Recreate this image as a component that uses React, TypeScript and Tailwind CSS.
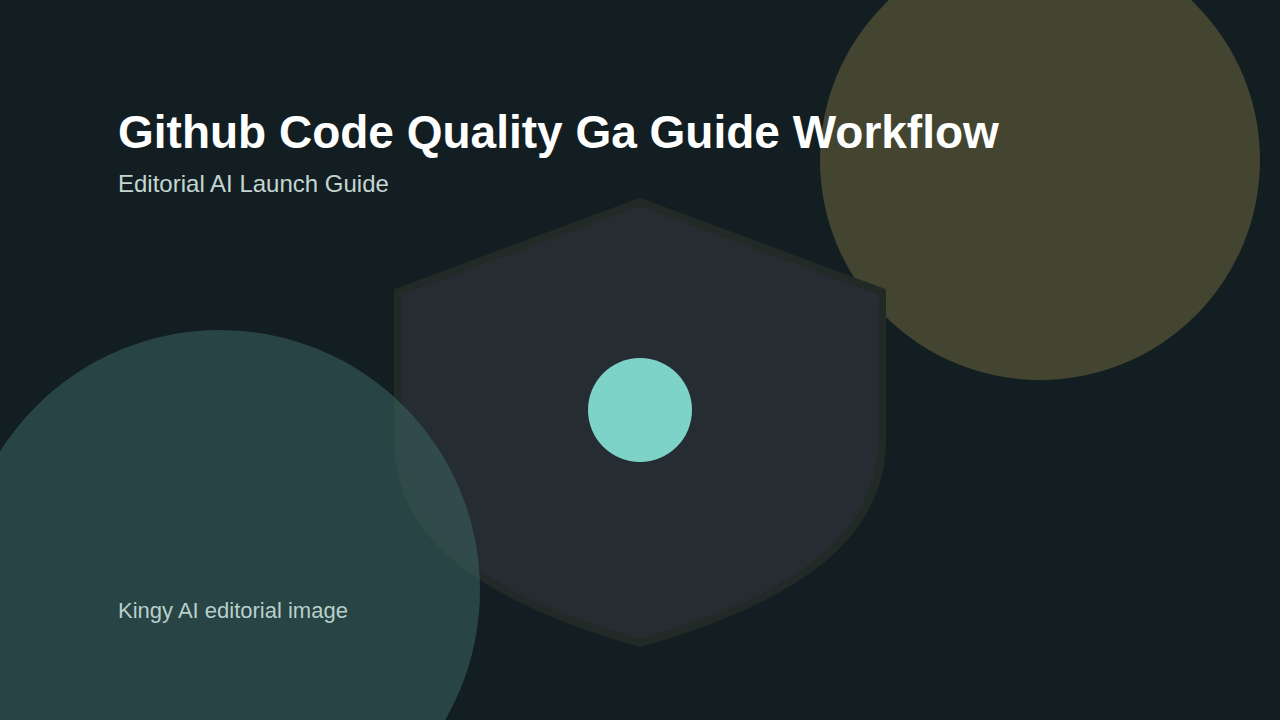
export default function App() {
  return (
    <div className="relative w-[1280px] h-[720px] overflow-hidden bg-[#131e22]" style={{ fontFamily: '"Liberation Sans", Arial, sans-serif' }}>
      <svg className="absolute inset-0" width="1280" height="720" viewBox="0 0 1280 720">
        <circle cx="1040" cy="160" r="220" fill="#444530" />
        <path
          d="M640 202 L882 292 L882 440 C882 540 790 600 640 643 C490 600 398 540 398 440 L398 292 Z"
          fill="#262d34"
          stroke="#222a27"
          strokeWidth="8"
          fillOpacity="0.97"
        />
        <circle cx="220" cy="590" r="260" fill="#3d6a68" fillOpacity="0.5" />
        <circle cx="640" cy="410" r="52" fill="#7dd3c8" />
      </svg>
      <div className="relative flex flex-col h-full pl-[118px] pt-[106px] pb-[96px]">
        <h1 className="text-[46px] font-bold text-white leading-[52px]">Github Code Quality Ga Guide Workflow</h1>
        <p className="text-[24px] text-[#c4d6d2] mt-[12px] leading-[28px]">Editorial AI Launch Guide</p>
        <p className="mt-auto text-[22px] text-[#b8cfcb] leading-[26px]">Kingy AI editorial image</p>
      </div>
    </div>
  );
}
